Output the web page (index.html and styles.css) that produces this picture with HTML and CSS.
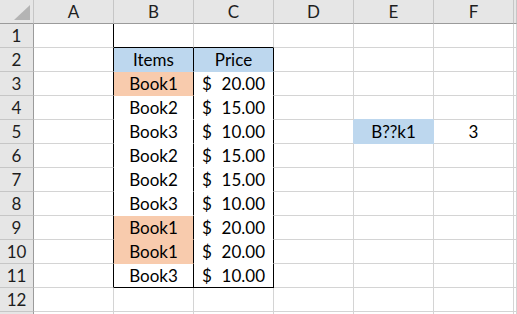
FILE: index.html
```html
<!DOCTYPE html>
<html>
<head>
<meta charset="utf-8">
<link rel="stylesheet" href="styles.css">
</head>
<body>
<div class="frame">
<div class="sheet">
  <!-- column headers -->
  <div class="corner"><span class="tri"></span></div>
  <div class="h">A</div><div class="h">B</div><div class="h">C</div><div class="h">D</div><div class="h">E</div><div class="h">F</div><div class="h"></div>

  <!-- row 1 -->
  <div class="rh">1</div>
  <div class="c tl-left"></div><div class="c tb-top"></div><div class="c tb-top"></div><div class="c"></div><div class="c"></div><div class="c"></div><div class="c"></div>

  <!-- row 2 -->
  <div class="rh">2</div>
  <div class="c tl-left"></div>
  <div class="c tb head">Items</div>
  <div class="c tb head">Price</div>
  <div class="c"></div><div class="c"></div><div class="c"></div><div class="c"></div>

  <!-- row 3 -->
  <div class="rh">3</div>
  <div class="c tl-left"></div>
  <div class="c tb peach">Book1</div>
  <div class="c tb money"><span>$</span><span>20.00</span></div>
  <div class="c"></div><div class="c"></div><div class="c"></div><div class="c"></div>

  <!-- row 4 -->
  <div class="rh">4</div>
  <div class="c tl-left"></div>
  <div class="c tb">Book2</div>
  <div class="c tb money"><span>$</span><span>15.00</span></div>
  <div class="c"></div><div class="c above-blue"></div><div class="c"></div><div class="c"></div>

  <!-- row 5 -->
  <div class="rh">5</div>
  <div class="c tl-left"></div>
  <div class="c tb">Book3</div>
  <div class="c tb money"><span>$</span><span>10.00</span></div>
  <div class="c left-of-blue"></div>
  <div class="c hit">B??k1</div>
  <div class="c center">3</div>
  <div class="c"></div>

  <!-- row 6 -->
  <div class="rh">6</div>
  <div class="c tl-left"></div>
  <div class="c tb">Book2</div>
  <div class="c tb money"><span>$</span><span>15.00</span></div>
  <div class="c"></div><div class="c"></div><div class="c"></div><div class="c"></div>

  <!-- row 7 -->
  <div class="rh">7</div>
  <div class="c tl-left"></div>
  <div class="c tb">Book2</div>
  <div class="c tb money"><span>$</span><span>15.00</span></div>
  <div class="c"></div><div class="c"></div><div class="c"></div><div class="c"></div>

  <!-- row 8 -->
  <div class="rh">8</div>
  <div class="c tl-left"></div>
  <div class="c tb">Book3</div>
  <div class="c tb money"><span>$</span><span>10.00</span></div>
  <div class="c"></div><div class="c"></div><div class="c"></div><div class="c"></div>

  <!-- row 9 -->
  <div class="rh">9</div>
  <div class="c tl-left"></div>
  <div class="c tb peach">Book1</div>
  <div class="c tb money"><span>$</span><span>20.00</span></div>
  <div class="c"></div><div class="c"></div><div class="c"></div><div class="c"></div>

  <!-- row 10 -->
  <div class="rh">10</div>
  <div class="c tl-left"></div>
  <div class="c tb peach">Book1</div>
  <div class="c tb money"><span>$</span><span>20.00</span></div>
  <div class="c"></div><div class="c"></div><div class="c"></div><div class="c"></div>

  <!-- row 11 -->
  <div class="rh">11</div>
  <div class="c tl-left"></div>
  <div class="c tb last">Book3</div>
  <div class="c tb last money"><span>$</span><span>10.00</span></div>
  <div class="c"></div><div class="c"></div><div class="c"></div><div class="c"></div>

  <!-- row 12 -->
  <div class="rh">12</div>
  <div class="c"></div><div class="c"></div><div class="c"></div><div class="c"></div><div class="c"></div><div class="c"></div><div class="c"></div>

  <!-- row 13 (only its top edge shows) -->
  <div class="rh"></div>
  <div class="c"></div><div class="c"></div><div class="c"></div><div class="c"></div><div class="c"></div><div class="c"></div><div class="c"></div>
</div>
</div>
</body>
</html>
```
FILE: styles.css
```css
html, body {
  margin: 0;
  padding: 0;
  background: #ffffff;
  overflow: hidden;
}

/* visible window onto the worksheet */
.frame {
  width: 517px;
  height: 314px;
  overflow: hidden;
}

.sheet {
  display: grid;
  grid-template-columns: 34px repeat(6, 80px) 3px;
  grid-auto-rows: 24px;
  font-family: "Lato", "Carlito", sans-serif;
  font-size: 17px;
  line-height: 23px;
  color: #000000;
}

.sheet > div {
  box-sizing: border-box;
  white-space: nowrap;
  overflow: hidden;
}

/* column header strip */
.h, .corner {
  background: #e6e6e6;
  border-right: 1px solid #c6c6c6;
  border-bottom: 1px solid #9b9b9b;
  text-align: center;
  color: #1e1e1e;
}

.corner {
  position: relative;
}

.tri {
  position: absolute;
  left: 14px;
  top: 5px;
  width: 16px;
  height: 15px;
  background: #b4b4b4;
  clip-path: polygon(100% 0, 100% 100%, 0 100%);
}

/* row number column */
.rh {
  background: #e6e6e6;
  border-right: 1px solid #9b9b9b;
  border-bottom: 1px solid #c6c6c6;
  text-align: center;
  color: #1e1e1e;
}

/* ordinary cells */
.c {
  border-right: 1px solid #d4d4d4;
  border-bottom: 1px solid #d4d4d4;
}

.center {
  text-align: center;
}

/* bordered data table B2:C11 */
.tl-left {
  border-right-color: #000000;
}

.tb-top {
  border-bottom-color: #000000;
}

.tb {
  background: #ffffff;
  border-right-color: #000000;
  border-bottom-color: #ffffff;
  text-align: center;
}

.tb.head {
  background: #bdd7ee;
  border-bottom-color: #bdd7ee;
}

.tb.peach {
  background: #f8cbad;
  border-bottom-color: #f8cbad;
}

.tb.last {
  border-bottom-color: #000000;
}

/* accounting format: symbol left, amount right */
.money {
  display: flex;
  justify-content: space-between;
  padding: 0 8px;
}

/* highlighted lookup cell */
.hit {
  background: #bdd7ee;
  border-bottom-color: #bdd7ee;
  border-right-color: #bdd7ee;
  text-align: center;
}

.above-blue {
  border-bottom-color: #bdd7ee;
}

.left-of-blue {
  border-right-color: #bdd7ee;
}
```
